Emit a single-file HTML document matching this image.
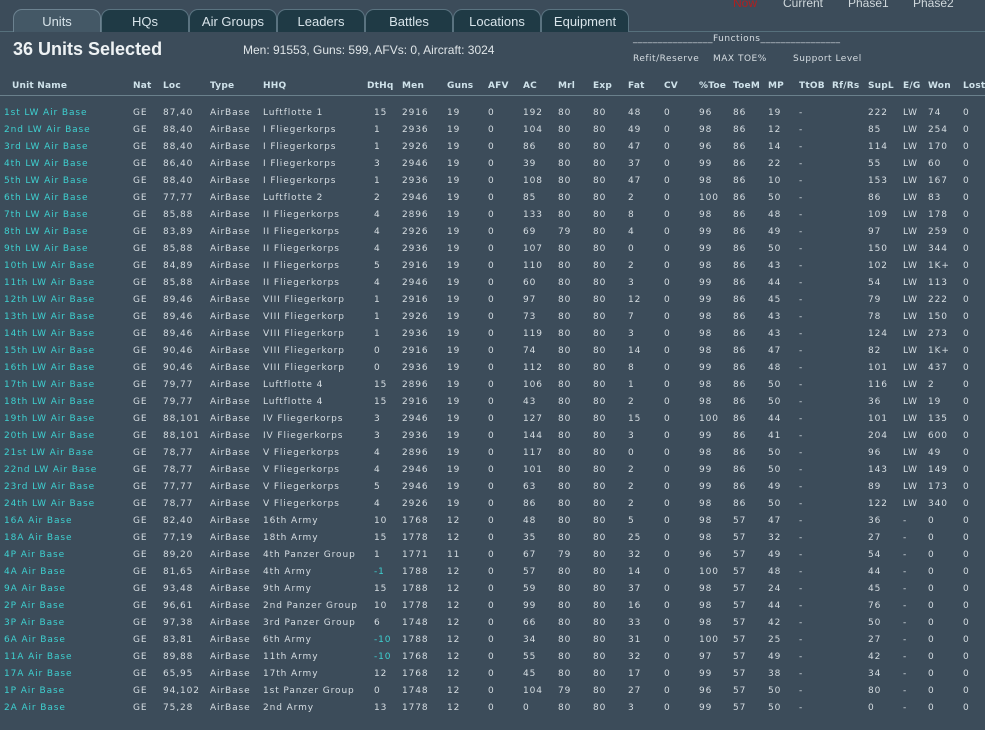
<!DOCTYPE html>
<html><head><meta charset="utf-8"><style>
body{margin:0;width:985px;height:730px;overflow:hidden;background:#3c4c5a;font-family:"DejaVu Sans","Liberation Sans",sans-serif;color:#d6dde2;position:relative}
.tab{position:absolute;top:9px;height:22px;border:1px solid #5a7380;border-bottom:none;border-radius:9px 9px 0 0;background:#1f3a45;color:#d8e4ea;font:13px "Liberation Sans",sans-serif;text-align:center;line-height:23px}
.tab.on{background:#445866;border-color:#6c8290}
.tl{position:absolute;left:0;right:0;top:31px;height:1px;background:#56707c}
.top{position:absolute;top:-4px;font:12px "Liberation Sans",sans-serif;color:#d0d8dc}
h1{position:absolute;left:13px;top:39px;margin:0;font:bold 18px "Liberation Sans",sans-serif;color:#eef2f4}
.st{position:absolute;left:243px;top:43px;font:12px "Liberation Sans",sans-serif;color:#dfe5e8}
.fn{position:absolute;font-size:9px;letter-spacing:.5px;color:#d6dde2}
.r{position:absolute;left:0;width:985px;height:17px;font-size:9px;letter-spacing:.9px;line-height:12px}
.r i{position:absolute;font-style:normal;white-space:nowrap}
.h{font-weight:bold;letter-spacing:.2px;color:#cfe2ea}
.r i:nth-child(1){left:4px;color:#3ed0d0}
.h i:nth-child(1){left:12px;color:#cfe2ea}
.r i:nth-child(2){left:133px}.r i:nth-child(3){left:163px}.r i:nth-child(4){left:210px}.r i:nth-child(5){left:263px}
.r i:nth-child(6){left:374px}.r i:nth-child(7){left:402px}.r i:nth-child(8){left:447px}.r i:nth-child(9){left:488px}
.h i:nth-child(6){left:367px}
.r i:nth-child(10){left:523px}.r i:nth-child(11){left:558px}.r i:nth-child(12){left:593px}.r i:nth-child(13){left:628px}
.r i:nth-child(14){left:664px}.r i:nth-child(15){left:699px}.r i:nth-child(16){left:733px}.r i:nth-child(17){left:768px}
.r i:nth-child(18){left:799px}.r i:nth-child(19){left:868px}.r i:nth-child(20){left:903px}.r i:nth-child(21){left:928px}.r i:nth-child(22){left:963px}
.h i:nth-child(19){left:832px}.h i:nth-child(20){left:868px}.h i:nth-child(21){left:903px}.h i:nth-child(22){left:928px}.h i:nth-child(23){left:963px}
.n{color:#3ed0d0}
.hl{position:absolute;left:0;top:95px;width:985px;height:1px;background:#6a808c}
.rows{position:absolute;left:0;top:2px;width:985px;height:728px}
</style></head><body>
<div class="top" style="left:733px;color:#b02020">Now</div>
<div class="top" style="left:783px">Current</div>
<div class="top" style="left:848px">Phase1</div>
<div class="top" style="left:913px">Phase2</div>
<div class="tl"></div>
<div class="tab on" style="left:13px;width:86px">Units</div>
<div class="tab" style="left:101px;width:86px">HQs</div>
<div class="tab" style="left:189px;width:86px">Air Groups</div>
<div class="tab" style="left:277px;width:86px">Leaders</div>
<div class="tab" style="left:365px;width:86px">Battles</div>
<div class="tab" style="left:453px;width:86px">Locations</div>
<div class="tab" style="left:541px;width:86px">Equipment</div>
<h1>36 Units Selected</h1>
<div class="st">Men: 91553, Guns: 599, AFVs: 0, Aircraft: 3024</div>
<div class="fn" style="left:633px;top:34px">________________Functions________________</div>
<div class="fn" style="left:633px;top:54px">Refit/Reserve</div>
<div class="fn" style="left:713px;top:54px">MAX TOE%</div>
<div class="fn" style="left:793px;top:54px">Support Level</div>
<div class="hl"></div>
<div class="rows">
<div class="r h" style="top:78px"><i>Unit Name</i><i>Nat</i><i>Loc</i><i>Type</i><i>HHQ</i><i>DtHq</i><i>Men</i><i>Guns</i><i>AFV</i><i>AC</i><i>Mrl</i><i>Exp</i><i>Fat</i><i>CV</i><i>%Toe</i><i>ToeM</i><i>MP</i><i>TtOB</i><i>Rf/Rs</i><i>SupL</i><i>E/G</i><i>Won</i><i>Lost</i></div>
<div class="r" style="top:105px"><i>1st LW Air Base</i><i>GE</i><i>87,40</i><i>AirBase</i><i>Luftflotte 1</i><i>15</i><i>2916</i><i>19</i><i>0</i><i>192</i><i>80</i><i>80</i><i>48</i><i>0</i><i>96</i><i>86</i><i>19</i><i>-</i><i>222</i><i>LW</i><i>74</i><i>0</i></div>
<div class="r" style="top:122px"><i>2nd LW Air Base</i><i>GE</i><i>88,40</i><i>AirBase</i><i>I Fliegerkorps</i><i>1</i><i>2936</i><i>19</i><i>0</i><i>104</i><i>80</i><i>80</i><i>49</i><i>0</i><i>98</i><i>86</i><i>12</i><i>-</i><i>85</i><i>LW</i><i>254</i><i>0</i></div>
<div class="r" style="top:139px"><i>3rd LW Air Base</i><i>GE</i><i>88,40</i><i>AirBase</i><i>I Fliegerkorps</i><i>1</i><i>2926</i><i>19</i><i>0</i><i>86</i><i>80</i><i>80</i><i>47</i><i>0</i><i>96</i><i>86</i><i>14</i><i>-</i><i>114</i><i>LW</i><i>170</i><i>0</i></div>
<div class="r" style="top:156px"><i>4th LW Air Base</i><i>GE</i><i>86,40</i><i>AirBase</i><i>I Fliegerkorps</i><i>3</i><i>2946</i><i>19</i><i>0</i><i>39</i><i>80</i><i>80</i><i>37</i><i>0</i><i>99</i><i>86</i><i>22</i><i>-</i><i>55</i><i>LW</i><i>60</i><i>0</i></div>
<div class="r" style="top:173px"><i>5th LW Air Base</i><i>GE</i><i>88,40</i><i>AirBase</i><i>I Fliegerkorps</i><i>1</i><i>2936</i><i>19</i><i>0</i><i>108</i><i>80</i><i>80</i><i>47</i><i>0</i><i>98</i><i>86</i><i>10</i><i>-</i><i>153</i><i>LW</i><i>167</i><i>0</i></div>
<div class="r" style="top:190px"><i>6th LW Air Base</i><i>GE</i><i>77,77</i><i>AirBase</i><i>Luftflotte 2</i><i>2</i><i>2946</i><i>19</i><i>0</i><i>85</i><i>80</i><i>80</i><i>2</i><i>0</i><i>100</i><i>86</i><i>50</i><i>-</i><i>86</i><i>LW</i><i>83</i><i>0</i></div>
<div class="r" style="top:207px"><i>7th LW Air Base</i><i>GE</i><i>85,88</i><i>AirBase</i><i>II Fliegerkorps</i><i>4</i><i>2896</i><i>19</i><i>0</i><i>133</i><i>80</i><i>80</i><i>8</i><i>0</i><i>98</i><i>86</i><i>48</i><i>-</i><i>109</i><i>LW</i><i>178</i><i>0</i></div>
<div class="r" style="top:224px"><i>8th LW Air Base</i><i>GE</i><i>83,89</i><i>AirBase</i><i>II Fliegerkorps</i><i>4</i><i>2926</i><i>19</i><i>0</i><i>69</i><i>79</i><i>80</i><i>4</i><i>0</i><i>99</i><i>86</i><i>49</i><i>-</i><i>97</i><i>LW</i><i>259</i><i>0</i></div>
<div class="r" style="top:241px"><i>9th LW Air Base</i><i>GE</i><i>85,88</i><i>AirBase</i><i>II Fliegerkorps</i><i>4</i><i>2936</i><i>19</i><i>0</i><i>107</i><i>80</i><i>80</i><i>0</i><i>0</i><i>99</i><i>86</i><i>50</i><i>-</i><i>150</i><i>LW</i><i>344</i><i>0</i></div>
<div class="r" style="top:258px"><i>10th LW Air Base</i><i>GE</i><i>84,89</i><i>AirBase</i><i>II Fliegerkorps</i><i>5</i><i>2916</i><i>19</i><i>0</i><i>110</i><i>80</i><i>80</i><i>2</i><i>0</i><i>98</i><i>86</i><i>43</i><i>-</i><i>102</i><i>LW</i><i>1K+</i><i>0</i></div>
<div class="r" style="top:275px"><i>11th LW Air Base</i><i>GE</i><i>85,88</i><i>AirBase</i><i>II Fliegerkorps</i><i>4</i><i>2946</i><i>19</i><i>0</i><i>60</i><i>80</i><i>80</i><i>3</i><i>0</i><i>99</i><i>86</i><i>44</i><i>-</i><i>54</i><i>LW</i><i>113</i><i>0</i></div>
<div class="r" style="top:292px"><i>12th LW Air Base</i><i>GE</i><i>89,46</i><i>AirBase</i><i>VIII Fliegerkorp</i><i>1</i><i>2916</i><i>19</i><i>0</i><i>97</i><i>80</i><i>80</i><i>12</i><i>0</i><i>99</i><i>86</i><i>45</i><i>-</i><i>79</i><i>LW</i><i>222</i><i>0</i></div>
<div class="r" style="top:309px"><i>13th LW Air Base</i><i>GE</i><i>89,46</i><i>AirBase</i><i>VIII Fliegerkorp</i><i>1</i><i>2926</i><i>19</i><i>0</i><i>73</i><i>80</i><i>80</i><i>7</i><i>0</i><i>98</i><i>86</i><i>43</i><i>-</i><i>78</i><i>LW</i><i>150</i><i>0</i></div>
<div class="r" style="top:326px"><i>14th LW Air Base</i><i>GE</i><i>89,46</i><i>AirBase</i><i>VIII Fliegerkorp</i><i>1</i><i>2936</i><i>19</i><i>0</i><i>119</i><i>80</i><i>80</i><i>3</i><i>0</i><i>98</i><i>86</i><i>43</i><i>-</i><i>124</i><i>LW</i><i>273</i><i>0</i></div>
<div class="r" style="top:343px"><i>15th LW Air Base</i><i>GE</i><i>90,46</i><i>AirBase</i><i>VIII Fliegerkorp</i><i>0</i><i>2916</i><i>19</i><i>0</i><i>74</i><i>80</i><i>80</i><i>14</i><i>0</i><i>98</i><i>86</i><i>47</i><i>-</i><i>82</i><i>LW</i><i>1K+</i><i>0</i></div>
<div class="r" style="top:360px"><i>16th LW Air Base</i><i>GE</i><i>90,46</i><i>AirBase</i><i>VIII Fliegerkorp</i><i>0</i><i>2936</i><i>19</i><i>0</i><i>112</i><i>80</i><i>80</i><i>8</i><i>0</i><i>99</i><i>86</i><i>48</i><i>-</i><i>101</i><i>LW</i><i>437</i><i>0</i></div>
<div class="r" style="top:377px"><i>17th LW Air Base</i><i>GE</i><i>79,77</i><i>AirBase</i><i>Luftflotte 4</i><i>15</i><i>2896</i><i>19</i><i>0</i><i>106</i><i>80</i><i>80</i><i>1</i><i>0</i><i>98</i><i>86</i><i>50</i><i>-</i><i>116</i><i>LW</i><i>2</i><i>0</i></div>
<div class="r" style="top:394px"><i>18th LW Air Base</i><i>GE</i><i>79,77</i><i>AirBase</i><i>Luftflotte 4</i><i>15</i><i>2916</i><i>19</i><i>0</i><i>43</i><i>80</i><i>80</i><i>2</i><i>0</i><i>98</i><i>86</i><i>50</i><i>-</i><i>36</i><i>LW</i><i>19</i><i>0</i></div>
<div class="r" style="top:411px"><i>19th LW Air Base</i><i>GE</i><i>88,101</i><i>AirBase</i><i>IV Fliegerkorps</i><i>3</i><i>2946</i><i>19</i><i>0</i><i>127</i><i>80</i><i>80</i><i>15</i><i>0</i><i>100</i><i>86</i><i>44</i><i>-</i><i>101</i><i>LW</i><i>135</i><i>0</i></div>
<div class="r" style="top:428px"><i>20th LW Air Base</i><i>GE</i><i>88,101</i><i>AirBase</i><i>IV Fliegerkorps</i><i>3</i><i>2936</i><i>19</i><i>0</i><i>144</i><i>80</i><i>80</i><i>3</i><i>0</i><i>99</i><i>86</i><i>41</i><i>-</i><i>204</i><i>LW</i><i>600</i><i>0</i></div>
<div class="r" style="top:445px"><i>21st LW Air Base</i><i>GE</i><i>78,77</i><i>AirBase</i><i>V Fliegerkorps</i><i>4</i><i>2896</i><i>19</i><i>0</i><i>117</i><i>80</i><i>80</i><i>0</i><i>0</i><i>98</i><i>86</i><i>50</i><i>-</i><i>96</i><i>LW</i><i>49</i><i>0</i></div>
<div class="r" style="top:462px"><i>22nd LW Air Base</i><i>GE</i><i>78,77</i><i>AirBase</i><i>V Fliegerkorps</i><i>4</i><i>2946</i><i>19</i><i>0</i><i>101</i><i>80</i><i>80</i><i>2</i><i>0</i><i>99</i><i>86</i><i>50</i><i>-</i><i>143</i><i>LW</i><i>149</i><i>0</i></div>
<div class="r" style="top:479px"><i>23rd LW Air Base</i><i>GE</i><i>77,77</i><i>AirBase</i><i>V Fliegerkorps</i><i>5</i><i>2946</i><i>19</i><i>0</i><i>63</i><i>80</i><i>80</i><i>2</i><i>0</i><i>99</i><i>86</i><i>49</i><i>-</i><i>89</i><i>LW</i><i>173</i><i>0</i></div>
<div class="r" style="top:496px"><i>24th LW Air Base</i><i>GE</i><i>78,77</i><i>AirBase</i><i>V Fliegerkorps</i><i>4</i><i>2926</i><i>19</i><i>0</i><i>86</i><i>80</i><i>80</i><i>2</i><i>0</i><i>98</i><i>86</i><i>50</i><i>-</i><i>122</i><i>LW</i><i>340</i><i>0</i></div>
<div class="r" style="top:513px"><i>16A Air Base</i><i>GE</i><i>82,40</i><i>AirBase</i><i>16th Army</i><i>10</i><i>1768</i><i>12</i><i>0</i><i>48</i><i>80</i><i>80</i><i>5</i><i>0</i><i>98</i><i>57</i><i>47</i><i>-</i><i>36</i><i>-</i><i>0</i><i>0</i></div>
<div class="r" style="top:530px"><i>18A Air Base</i><i>GE</i><i>77,19</i><i>AirBase</i><i>18th Army</i><i>15</i><i>1778</i><i>12</i><i>0</i><i>35</i><i>80</i><i>80</i><i>25</i><i>0</i><i>98</i><i>57</i><i>32</i><i>-</i><i>27</i><i>-</i><i>0</i><i>0</i></div>
<div class="r" style="top:547px"><i>4P Air Base</i><i>GE</i><i>89,20</i><i>AirBase</i><i>4th Panzer Group</i><i>1</i><i>1771</i><i>11</i><i>0</i><i>67</i><i>79</i><i>80</i><i>32</i><i>0</i><i>96</i><i>57</i><i>49</i><i>-</i><i>54</i><i>-</i><i>0</i><i>0</i></div>
<div class="r" style="top:564px"><i>4A Air Base</i><i>GE</i><i>81,65</i><i>AirBase</i><i>4th Army</i><i class="n">-1</i><i>1788</i><i>12</i><i>0</i><i>57</i><i>80</i><i>80</i><i>14</i><i>0</i><i>100</i><i>57</i><i>48</i><i>-</i><i>44</i><i>-</i><i>0</i><i>0</i></div>
<div class="r" style="top:581px"><i>9A Air Base</i><i>GE</i><i>93,48</i><i>AirBase</i><i>9th Army</i><i>15</i><i>1788</i><i>12</i><i>0</i><i>59</i><i>80</i><i>80</i><i>37</i><i>0</i><i>98</i><i>57</i><i>24</i><i>-</i><i>45</i><i>-</i><i>0</i><i>0</i></div>
<div class="r" style="top:598px"><i>2P Air Base</i><i>GE</i><i>96,61</i><i>AirBase</i><i>2nd Panzer Group</i><i>10</i><i>1778</i><i>12</i><i>0</i><i>99</i><i>80</i><i>80</i><i>16</i><i>0</i><i>98</i><i>57</i><i>44</i><i>-</i><i>76</i><i>-</i><i>0</i><i>0</i></div>
<div class="r" style="top:615px"><i>3P Air Base</i><i>GE</i><i>97,38</i><i>AirBase</i><i>3rd Panzer Group</i><i>6</i><i>1748</i><i>12</i><i>0</i><i>66</i><i>80</i><i>80</i><i>33</i><i>0</i><i>98</i><i>57</i><i>42</i><i>-</i><i>50</i><i>-</i><i>0</i><i>0</i></div>
<div class="r" style="top:632px"><i>6A Air Base</i><i>GE</i><i>83,81</i><i>AirBase</i><i>6th Army</i><i class="n">-10</i><i>1788</i><i>12</i><i>0</i><i>34</i><i>80</i><i>80</i><i>31</i><i>0</i><i>100</i><i>57</i><i>25</i><i>-</i><i>27</i><i>-</i><i>0</i><i>0</i></div>
<div class="r" style="top:649px"><i>11A Air Base</i><i>GE</i><i>89,88</i><i>AirBase</i><i>11th Army</i><i class="n">-10</i><i>1768</i><i>12</i><i>0</i><i>55</i><i>80</i><i>80</i><i>32</i><i>0</i><i>97</i><i>57</i><i>49</i><i>-</i><i>42</i><i>-</i><i>0</i><i>0</i></div>
<div class="r" style="top:666px"><i>17A Air Base</i><i>GE</i><i>65,95</i><i>AirBase</i><i>17th Army</i><i>12</i><i>1768</i><i>12</i><i>0</i><i>45</i><i>80</i><i>80</i><i>17</i><i>0</i><i>99</i><i>57</i><i>38</i><i>-</i><i>34</i><i>-</i><i>0</i><i>0</i></div>
<div class="r" style="top:683px"><i>1P Air Base</i><i>GE</i><i>94,102</i><i>AirBase</i><i>1st Panzer Group</i><i>0</i><i>1748</i><i>12</i><i>0</i><i>104</i><i>79</i><i>80</i><i>27</i><i>0</i><i>96</i><i>57</i><i>50</i><i>-</i><i>80</i><i>-</i><i>0</i><i>0</i></div>
<div class="r" style="top:700px"><i>2A Air Base</i><i>GE</i><i>75,28</i><i>AirBase</i><i>2nd Army</i><i>13</i><i>1778</i><i>12</i><i>0</i><i>0</i><i>80</i><i>80</i><i>3</i><i>0</i><i>99</i><i>57</i><i>50</i><i>-</i><i>0</i><i>-</i><i>0</i><i>0</i></div>
</div>
</body></html>
